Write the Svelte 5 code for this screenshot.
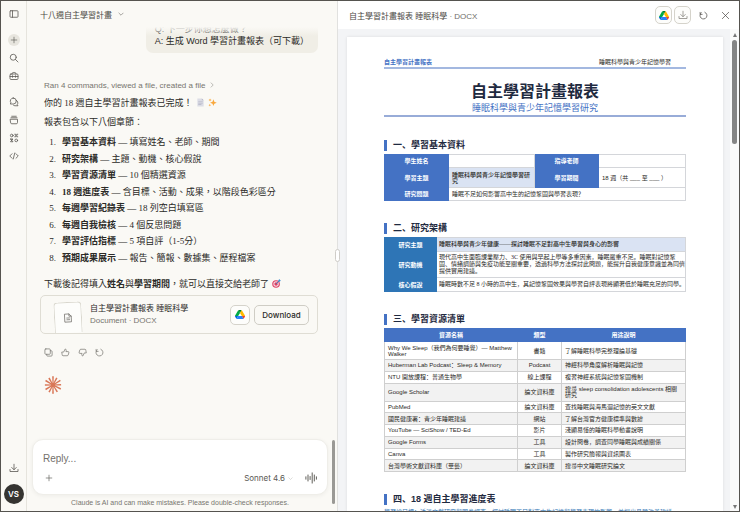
<script>
  const navTop = ['plus', 'search', 'toolbox'];
  const navMain = ['chats', 'projects', 'artifacts', 'code'];

  const chapters = [
    { name: '學習基本資料', note: '填寫姓名、老師、期間' },
    { name: '研究架構', note: '主題、動機、核心假說' },
    { name: '學習資源清單', note: '10 個精選資源' },
    { name: '18 週進度表', note: '含目標、活動、成果，以階段色彩區分' },
    { name: '每週學習紀錄表', note: '18 列空白填寫區' },
    { name: '每週自我檢核', note: '4 個反思問題' },
    { name: '學習評估指標', note: '5 項自評（1-5分）' },
    { name: '預期成果展示', note: '報告、簡報、數據集、歷程檔案' }
  ];

  const resources = [
    ['Why We Sleep（我們為何要睡覺）— Matthew Walker', '書籍', '了解睡眠科學完整理論基礎'],
    ['Huberman Lab Podcast：Sleep & Memory', 'Podcast', '神經科學角度解析睡眠與記憶'],
    ['NTU 開放課程：普通生物學', '線上課程', '複習神經系統與記憶鞏固機制'],
    ['Google Scholar', '論文資料庫', '搜尋 sleep consolidation adolescents 相關研究'],
    ['PubMed', '論文資料庫', '查找睡眠與海馬迴記憶的英文文獻'],
    ['國民健康署：青少年睡眠建議', '網站', '了解台灣官方健康標準與數據'],
    ['YouTube — SciShow / TED-Ed', '影片', '淺顯易懂的睡眠科學動畫說明'],
    ['Google Forms', '工具', '設計問卷，調查同學睡眠與成績關係'],
    ['Canva', '工具', '製作研究簡報與資訊圖表'],
    ['台灣學術文獻資料庫（華藝）', '論文資料庫', '搜尋中文睡眠研究論文']
  ];

  const rays = [0, 28, 58, 88, 117, 148, 180, 209, 239, 270, 301, 330];

  let reply = $state('');
</script>

{#snippet icon(name)}
  <svg class="icon" viewBox="0 0 20 20" aria-hidden="true">
    {#if name === 'sidebar'}
      <rect x="2" y="3.5" width="16" height="13" rx="1.5" /><path d="M7 3.5v13" />
    {:else if name === 'plus'}
      <path d="M10 3v14M3 10h14" />
    {:else if name === 'search'}
      <circle cx="8.5" cy="8.5" r="6" /><path d="M13 13l5 5" />
    {:else if name === 'toolbox'}
      <path d="M6.500 6V5a2 2 0 0 1 2-2h3a2 2 0 0 1 2 2v1M4 6h12a2 2 0 0 1 2 2v7a2 2 0 0 1-2 2H4a2 2 0 0 1-2-2V8a2 2 0 0 1 2-2zM2 11h16M7 9.500v3M13 9.500v3" />
    {:else if name === 'chats'}
      <path d="M8.500 2a6 6 0 0 1 0 12H2.500l1.500-2.200A6 6 0 0 1 8.500 2zM14.500 6.500a5.500 5.500 0 0 1 2 8.500l1.500 2.500h-6a6 6 0 0 1-3-1" />
    {:else if name === 'projects'}
      <path d="M5.500 2.500h9M4 5.500h12M3 8.500h14v6.500a2.500 2.500 0 0 1-2.500 2.500h-9A2.500 2.500 0 0 1 3 15z" />
    {:else if name === 'artifacts'}
      <circle cx="5.500" cy="5" r="2.700" /><path d="M11.500 2.500h2v5h-2M17.500 2.500h-2v5h2M3 12h5l-2.500 2.500L8 17.500H3l2.500-3z" /><circle cx="14.500" cy="14.800" r="2.700" />
    {:else if name === 'code'}
      <path d="M6 5.500L1.500 10 6 14.500M14 5.500l4.500 4.500-4.500 4.500M11.500 4l-3 12" />
    {:else if name === 'download'}
      <path d="M10 2.500v10.500M5.500 9l4.500 4.500L14.500 9M2 13v4h16v-4" />
    {:else if name === 'chevron'}
      <path d="M3 7l7 7 7-7" />
    {:else if name === 'right'}
      <path d="M7 3l7 7-7 7" />
    {:else if name === 'copy'}
      <rect x="2" y="2" width="12" height="12" rx="2" /><path d="M14 6h2a2 2 0 0 1 2 2v8a2 2 0 0 1-2 2H8a2 2 0 0 1-2-2v-2" />
    {:else if name === 'up' || name === 'down'}
      <path transform={name === 'down' ? 'rotate(180 10 10)' : null} d="M2.500 9H6l3-6.500c2 0 3 1 2.500 3L11 8h4.500a2 2 0 0 1 2 2.500l-1.500 5a2.500 2.500 0 0 1-2.300 1.700H4.500a2 2 0 0 1-2-2z" />
    {:else if name === 'retry'}
      <path d="M2.500 3v4.500H7M5 3.800A7.800 7.800 0 1 0 13 2.700" />
    {:else if name === 'close'}
      <path d="M3 3l14 14M17 3L3 17" />
    {:else if name === 'voice'}
      <path d="M1.500 8v4M5 5v10M8.500 7.500v5M12 1.500v17M15.500 5v10M19 8v4" />
    {:else if name === 'file'}
      <path d="M4 2h8l4.500 4.500V18H4zM12 2v4.500h4.500M7.500 10h5.500M7.500 13.500h5.500" />
    {/if}
  </svg>
{/snippet}

{#snippet drive()}
  <svg class="drive" viewBox="0 0 87 78" aria-hidden="true">
    <path fill="#0066da" d="M6.600 66.850l3.850 6.650c.8 1.400 1.950 2.500 3.300 3.300L27.500 53H0c0 1.550.4 3.100 1.200 4.500z" />
    <path fill="#00ac47" d="M43.650 25L29.900 1.200c-1.350.8-2.500 1.900-3.300 3.300l-25.400 44A9 9 0 0 0 0 53h27.500z" />
    <path fill="#ea4335" d="M73.550 76.800c1.350-.8 2.500-1.900 3.300-3.300l1.600-2.750 7.650-13.250c.8-1.400 1.200-2.950 1.200-4.500H59.800l5.850 11.500z" />
    <path fill="#00832d" d="M43.650 25L57.400 1.200C56.050.4 54.500 0 52.900 0H34.400c-1.600 0-3.150.45-4.500 1.200z" />
    <path fill="#2684fc" d="M59.800 53H27.500L13.750 76.800c1.350.8 2.900 1.200 4.500 1.200h50.800c1.600 0 3.150-.45 4.500-1.200z" />
    <path fill="#ffba00" d="M73.400 26.500l-12.700-22c-.8-1.400-1.950-2.500-3.300-3.300L43.650 25 59.800 53h27.450c0-1.550-.4-3.100-1.200-4.500z" />
  </svg>
{/snippet}

<div class="app">
  <nav class="rail" aria-label="Main">
    <button class="rail-btn" aria-label="Toggle sidebar">{@render icon('sidebar')}</button>
    <div class="rail-group">
      {#each navTop as name}
        <button class="rail-btn" class:filled={name === 'plus'} aria-label={name}>{@render icon(name)}</button>
      {/each}
    </div>
    <div class="rail-group">
      {#each navMain as name}
        <button class="rail-btn" aria-label={name}>{@render icon(name)}</button>
      {/each}
    </div>
    <div class="rail-foot">
      <button class="rail-btn" aria-label="Get apps">{@render icon('download')}</button>
      <button class="avatar">VS</button>
    </div>
  </nav>

  <main class="chat">
    <header class="chat-head">
      <button class="chat-title">十八週自主學習計畫 {@render icon('chevron')}</button>
    </header>

    <div class="thread">
      <div class="bubble">
        <p>Q: 下一步你想怎麼做？</p>
        <p>A: 生成 Word 學習計畫報表（可下載）</p>
      </div>

      <button class="steps">Ran 4 commands, viewed a file, created a file {@render icon('right')}</button>

      <div class="answer">
        <p>
          你的 18 週自主學習計畫報表已完成！
          <svg class="emoji" viewBox="0 0 20 20" aria-hidden="true">
            <path fill="#dcdde6" d="M3 1h10l4 4v14H3z" />
            <path fill="#b4b6c6" d="M13 1l4 4h-4zM5 7h10v1.500H5zM5 10.500h10V12H5zM5 14h7v1.500H5z" />
          </svg>
          <svg class="emoji" viewBox="0 0 20 20" aria-hidden="true">
            <path fill="#f9a83c" d="M12 3l2 5.500 5.500 2-5.500 2-2 5.500-2-5.500-5.500-2L10 8.500zM4.500 1l1 2.500L8 4.500l-2.500 1-1 2.500-1-2.500L1 4.500l2.500-1zM4 13l.8 2.200L7 16l-2.200.8L4 19l-.8-2.200L1 16l2.200-.8z" />
          </svg>
        </p>
        <p>報表包含以下八個章節：</p>
        <ol>
          {#each chapters as chapter, i}
            <li><span class="num">{i + 1}.</span><span><strong>{chapter.name}</strong> — {chapter.note}</span></li>
          {/each}
        </ol>
        <p>
          下載後記得填入<strong>姓名</strong>與<strong>學習期間</strong>，就可以直接交給老師了
          <svg class="emoji" viewBox="0 0 20 20" aria-hidden="true">
            <circle cx="9" cy="11" r="8.500" fill="#df3f62" />
            <circle cx="9" cy="11" r="6" fill="#f3e5ec" />
            <circle cx="9" cy="11" r="3.800" fill="#df3f62" />
            <path d="M9 11l7-7" stroke="#3b74b8" stroke-width="2" />
            <path fill="#3b8fd0" d="M14 3l3-3 .5 2.500L20 3l-3 3h-3z" />
          </svg>
        </p>
      </div>

      <section class="file-card">
        <div class="thumb">{@render icon('file')}</div>
        <div class="file-info">
          <h3>自主學習計畫報表 睡眠科學</h3>
          <span>Document · DOCX</span>
        </div>
        <button class="square" aria-label="Save to Drive">{@render drive()}</button>
        <button class="download">Download</button>
      </section>

      <div class="actions">
        <button aria-label="Copy">{@render icon('copy')}</button>
        <button aria-label="Good response">{@render icon('up')}</button>
        <button aria-label="Bad response">{@render icon('down')}</button>
        <button aria-label="Retry">{@render icon('retry')}</button>
      </div>

      <svg class="spark" viewBox="-10 -10 20 20" aria-hidden="true">
        {#each rays as angle, i}
          <path d="M-.5 0L-.9 {i % 2 ? -9 : -9.700}H.9L.5 0z" transform="rotate({angle})" />
        {/each}
        <circle r="2.500" />
      </svg>
    </div>

    <footer class="chat-foot">
      <form class="composer">
        <input aria-label="Reply" placeholder="Reply..." bind:value={reply} />
        <div class="composer-row">
          <button type="button" aria-label="Attach">{@render icon('plus')}</button>
          <button type="button" class="model">Sonnet 4.6 {@render icon('chevron')}</button>
          <button type="button" class="voice" aria-label="Voice">{@render icon('voice')}</button>
        </div>
      </form>
      <p class="disclaimer">Claude is AI and can make mistakes. Please double-check responses.</p>
    </footer>
    <div class="chat-scroll"></div>
  </main>

  <section class="panel">
    <div class="handle"></div>
    <header class="panel-head">
      <h2>自主學習計畫報表 睡眠科學 <span>· DOCX</span></h2>
      <button class="square" aria-label="Save to Drive">{@render drive()}</button>
      <button class="square" aria-label="Download">{@render icon('download')}</button>
      <button class="bare" aria-label="Refresh">{@render icon('retry')}</button>
      <button class="bare" aria-label="Close">{@render icon('close')}</button>
    </header>

    <div class="panel-body">
      <article class="page">
        <div class="page-head">
          <strong>自主學習計畫報表</strong>
          <span>睡眠科學與青少年記憶學習</span>
        </div>
        <div class="cover">
          <h1>自主學習計畫報表</h1>
          <p>睡眠科學與青少年記憶學習研究</p>
        </div>

        <h4>一、學習基本資料</h4>
        <table class="basic">
          <colgroup><col class="label" /><col class="wide" /><col class="label" /><col /></colgroup>
          <tbody>
            <tr><th>學生姓名</th><td></td><th>指導老師</th><td></td></tr>
            <tr class="tall"><th>學習主題</th><td class="tint">睡眠科學與青少年記憶學習研究</td><th>學習期間</th><td>18 週（共 ___ 至 ___ ）</td></tr>
            <tr><th>研究問題</th><td colspan="3">睡眠不足如何影響高中生的記憶鞏固與學習表現？</td></tr>
          </tbody>
        </table>

        <h4>二、研究架構</h4>
        <table class="frame">
          <colgroup><col class="label" /><col /></colgroup>
          <tbody>
            <tr><th>研究主題</th><td class="tint">睡眠科學與青少年健康——探討睡眠不足對高中生學習與身心的影響</td></tr>
            <tr><th>研究動機</th><td>現代高中生面臨課業壓力、3C 使用與早起上學等多重因素，睡眠嚴重不足。睡眠對記憶鞏固、情緒調節與免疫功能至關重要，透過科學方法探討此問題，能提升自我健康意識並為同儕提供實用建議。</td></tr>
            <tr><th>核心假說</th><td class="one-line">睡眠時數不足 8 小時的高中生，其記憶鞏固效果與學習自評表現將顯著低於睡眠充足的同學。</td></tr>
          </tbody>
        </table>

        <h4>三、學習資源清單</h4>
        <table class="resources">
          <colgroup><col class="name" /><col class="kind" /><col /></colgroup>
          <thead>
            <tr><th>資源名稱</th><th>類型</th><th>用途說明</th></tr>
          </thead>
          <tbody>
            {#each resources as [name, kind, use]}
              <tr><td>{name}</td><td class="kind">{kind}</td><td>{use}</td></tr>
            {/each}
          </tbody>
        </table>

        <h4>四、18 週自主學習進度表</h4>
        <p class="goal">學習總目標：透過文獻研究與問卷調查，探討睡眠不足對高中生記憶與學習表現的影響，並提出具體改善建議。</p>
      </article>
      <div class="scrollbar">
        <i class="arrow up"></i>
        <i class="bar"></i>
        <i class="arrow"></i>
      </div>
    </div>
  </section>
</div>

<style>
  :global(body) {
    margin: 0;
    background: #faf9f5;
  }

  .app {
    display: grid;
    grid-template-columns: 26px 310fr 402fr;
    height: 100vh;
    box-sizing: border-box;
    border: 1px solid #55534f;
    overflow: hidden;
    color: #2b2a27;
    font-family: "Liberation Sans", "Noto Sans CJK TC", sans-serif;
    font-size: 8px;
  }

  .app * {
    box-sizing: border-box;
  }

  h1, h2, h3, h4, p, ol {
    margin: 0;
    padding: 0;
    font-weight: 400;
  }

  button {
    display: flex;
    align-items: center;
    justify-content: center;
    padding: 0;
    border: 0;
    background: none;
    color: inherit;
    font: inherit;
  }

  .icon {
    width: 10px;
    height: 10px;
    flex: none;
    fill: none;
    stroke: currentColor;
    stroke-width: 1.6;
    stroke-linecap: round;
    stroke-linejoin: round;
  }

  .drive {
    width: 10px;
    height: 9px;
  }

  /* Left rail */
  .rail {
    display: flex;
    flex-direction: column;
    align-items: center;
    padding: 4px 0 7px;
    border-right: 1px solid #e6e4dd;
    color: #5a5853;
  }

  .rail-btn {
    width: 18px;
    height: 18px;
    border-radius: 50%;
  }

  .rail-btn.filled .icon {
    padding: 2px;
    width: 12px;
    height: 12px;
    border-radius: 50%;
    background: #e7e5de;
  }

  .rail-group {
    display: flex;
    flex-direction: column;
    margin-top: 8px;
  }

  .rail-foot {
    display: flex;
    flex-direction: column;
    align-items: center;
    gap: 7px;
    margin-top: auto;
  }

  .avatar {
    width: 20px;
    height: 20px;
    border-radius: 50%;
    background: #353431;
    color: #fff;
    font-family: Inter, sans-serif;
    font-weight: 600;
  }

  /* Conversation */
  .chat {
    position: relative;
    display: flex;
    flex-direction: column;
    min-width: 0;
    min-height: 0;
  }

  .chat-head {
    position: relative;
    z-index: 1;
    flex: none;
    height: 26px;
    padding: 0 13px;
    background: #faf9f5;
  }

  .chat-head::after {
    content: "";
    position: absolute;
    top: 100%;
    left: 0;
    right: 0;
    height: 9px;
    background: linear-gradient(#faf9f5, #faf9f500);
  }

  .chat-title {
    gap: 6px;
    height: 26px;
    color: #4b4944;
  }

  .chat-title .icon {
    width: 6px;
    height: 6px;
  }

  .thread {
    display: flex;
    flex: 1;
    flex-direction: column;
    min-height: 0;
    padding: 0 19px 0 17px;
  }

  .bubble {
    align-self: flex-end;
    margin-top: -10px;
    padding: 6px 9px;
    border-radius: 7px;
    background: #f0eee6;
    font-size: 9px;
    line-height: 12px;
  }

  .steps {
    gap: 4px;
    align-self: flex-start;
    height: 12px;
    margin-top: 26px;
    color: #77756f;
  }

  .steps .icon {
    width: 6px;
    height: 6px;
  }

  .answer {
    display: flex;
    flex-direction: column;
    margin-top: 4px;
    font-family: "Liberation Serif", "Noto Sans CJK TC", serif;
    font-size: 9px;
    line-height: 16px;
  }

  .answer p + p {
    margin-top: 3px;
  }

  .answer strong {
    font-weight: 700;
  }

  .answer ol {
    display: grid;
    grid-auto-rows: 1fr;
    align-items: center;
    height: 132px;
    margin: 4px 0 10px;
    list-style: none;
  }

  .answer li {
    display: flex;
    gap: 6px;
  }

  .num {
    width: 12px;
    text-align: right;
  }

  .emoji {
    width: 9px;
    height: 9px;
    margin-left: 1px;
    vertical-align: -1px;
  }

  .file-card {
    display: flex;
    align-items: center;
    gap: 4px;
    height: 39px;
    margin: 3px 0 0 -4px;
    padding: 0 8px 0 13px;
    border: 1px solid #dfddd4;
    border-radius: 5px;
    overflow: hidden;
  }

  .thumb {
    display: flex;
    align-items: center;
    justify-content: center;
    align-self: flex-end;
    width: 28px;
    height: 31px;
    margin-right: 4px;
    border: 1px solid #d9d7ce;
    border-bottom: 0;
    border-radius: 4px 4px 0 0;
    background: #fdfdfb;
    color: #77756f;
    transform: rotate(-3deg);
  }

  .file-info {
    flex: 1;
    line-height: 12px;
  }

  .file-info h3 {
    font-size: 8px;
  }

  .file-info span {
    color: #77756f;
  }

  .square {
    width: 17px;
    height: 18px;
    border: 1px solid #d5d3cb;
    border-radius: 5px;
    background: #fdfdfb;
  }

  .file-card .square {
    width: 20px;
    height: 20px;
  }

  .download {
    width: 55px;
    height: 20px;
    border: 1px solid #cfcdc5;
    border-radius: 5px;
    font-family: Inter, sans-serif;
    font-weight: 500;
  }

  .actions {
    display: flex;
    gap: 8px;
    margin-top: 14px;
    color: #77756f;
  }

  .actions .icon {
    width: 9px;
    height: 9px;
  }

  .spark {
    width: 18px;
    height: 18px;
    margin-top: 19px;
    fill: #d97757;
  }

  .chat-foot {
    flex: none;
    padding: 0 9px 2px 5px;
  }

  .composer {
    height: 56px;
    padding: 11px 10px 8px;
    border: 1px solid #efeee9;
    border-radius: 11px;
    background: #fff;
    box-shadow: 0 1px 4px #0000000d;
  }

  .composer input {
    display: block;
    width: 100%;
    height: 14px;
    padding: 0;
    border: 0;
    outline: 0;
    background: none;
    color: inherit;
    font: inherit;
    font-size: 10px;
  }

  .composer input::placeholder {
    color: #73716c;
    opacity: 1;
  }

  .composer-row {
    display: flex;
    align-items: center;
    height: 14px;
    margin-top: 6px;
    color: #5a5853;
  }

  .composer-row .icon {
    width: 8px;
    height: 8px;
    margin-left: 2px;
  }

  .model {
    gap: 3px;
    margin-left: auto;
    font-family: Inter, sans-serif;
  }

  .composer-row .model .icon {
    width: 5px;
    height: 5px;
    margin: 0;
    stroke: #aaa8a2;
  }

  .composer-row .voice .icon {
    width: 12px;
    height: 12px;
    margin-left: 12px;
  }

  .disclaimer {
    margin-top: 2px;
    color: #77756f;
    font-size: 7px;
    line-height: 12px;
    text-align: center;
  }

  .chat-scroll {
    position: absolute;
    right: 2px;
    bottom: 7px;
    width: 3px;
    height: 64px;
    border-radius: 2px;
    background: #9a9995;
  }

  /* Document panel */
  .panel {
    position: relative;
    display: flex;
    flex-direction: column;
    min-width: 0;
    min-height: 0;
    border-left: 1px solid #e1e1df;
    background: #f3f4f6;
  }

  .handle {
    position: absolute;
    top: 248px;
    left: -3px;
    width: 5px;
    height: 13px;
    border: 1px solid #cfcdc8;
    border-radius: 3px;
    background: #fff;
  }

  .panel-head {
    display: flex;
    flex: none;
    align-items: center;
    gap: 2px;
    height: 28px;
    padding: 0 4px 0 11px;
    background: #fff;
    color: #4b4944;
  }

  .panel-head h2 {
    flex: 1;
    font-size: 8px;
  }

  .panel-head span {
    color: #6f6d68;
  }

  .panel-head .square .icon {
    color: #8a8883;
  }

  .bare {
    width: 20px;
    height: 18px;
  }

  .bare .icon {
    width: 9px;
    height: 9px;
  }

  .panel-body {
    display: flex;
    flex: 1;
    min-height: 0;
    padding-left: 9px;
  }

  .page {
    flex: 1;
    margin-top: 8px;
    padding: 20px 37px 0;
    background: #fff;
    box-shadow: 0 0 3px #0000001a;
    font-family: "Liberation Sans", "Noto Sans CJK SC", sans-serif;
    font-size: 6px;
    line-height: 6px;
    overflow: hidden;
  }

  .page-head {
    display: flex;
    align-items: center;
    justify-content: space-between;
    height: 12px;
    padding-right: 15px;
    border-bottom: 2px solid #a3b8e0;
  }

  .page-head strong {
    color: #4472c4;
  }

  .cover {
    margin-bottom: 23px;
    padding-top: 13px;
    border-bottom: 2px solid #98acd8;
    text-align: center;
  }

  .cover h1 {
    color: #1f2a40;
    font-size: 16px;
    font-weight: 700;
    line-height: 20px;
  }

  .cover p {
    color: #4472c4;
    font-size: 9px;
    line-height: 13px;
  }

  h4 {
    margin: 0 0 3px;
    padding-left: 6px;
    border-left: 3px solid #4472c4;
    color: #1f2a40;
    font-size: 9px;
    font-weight: 700;
    line-height: 11px;
  }

  table {
    width: 100%;
    margin-bottom: 22px;
    border-collapse: collapse;
    table-layout: fixed;
  }

  th, td {
    height: 13px;
    padding: 2px 3px;
    border: 1px solid #d4d6da;
    text-align: left;
  }

  th {
    border-color: #4472c4;
    background: #4472c4;
    color: #fff;
    font-weight: 700;
    text-align: center;
  }

  .tint {
    background: #dae3f3;
    font-weight: 500;
  }

  .basic .label {
    width: 64px;
  }

  .basic .wide {
    width: 86px;
  }

  .basic .tall {
    height: 20px;
  }

  .frame .label {
    width: 52px;
  }

  .frame th {
    height: 14px;
    border-color: #2e75b6;
    background: #2e75b6;
  }

  .frame td {
    padding: 2px 0 2px 2px;
    font-family: "Liberation Serif", "Noto Sans CJK SC", serif;
    line-height: 7px;
  }

  .frame .one-line {
    white-space: nowrap;
  }

  .resources {
    height: 144px;
  }

  .resources .name {
    width: 133px;
  }

  .resources col.kind {
    width: 44px;
  }

  .resources td {
    height: 11px;
    border-color: #cfcfcf;
  }

  .resources td.kind {
    text-align: center;
  }

  .resources tbody tr:nth-child(even) {
    background: #f2f2f2;
  }

  .goal {
    color: #2e75b6;
    line-height: 8px;
  }

  .scrollbar {
    display: flex;
    flex: none;
    flex-direction: column;
    align-items: center;
    gap: 3px;
    width: 9px;
    margin-left: 7px;
    padding: 4px 0 2px;
    background: #fafafa;
  }

  .bar {
    width: 5px;
    height: 104px;
    border-radius: 3px;
    background: #858585;
  }

  .arrow {
    margin-top: auto;
    border: 2px solid transparent;
    border-top: 4px solid #777;
    border-bottom: 0;
  }

  .arrow.up {
    margin-top: 0;
    border-top: 0;
    border-bottom: 4px solid #777;
  }
</style>
